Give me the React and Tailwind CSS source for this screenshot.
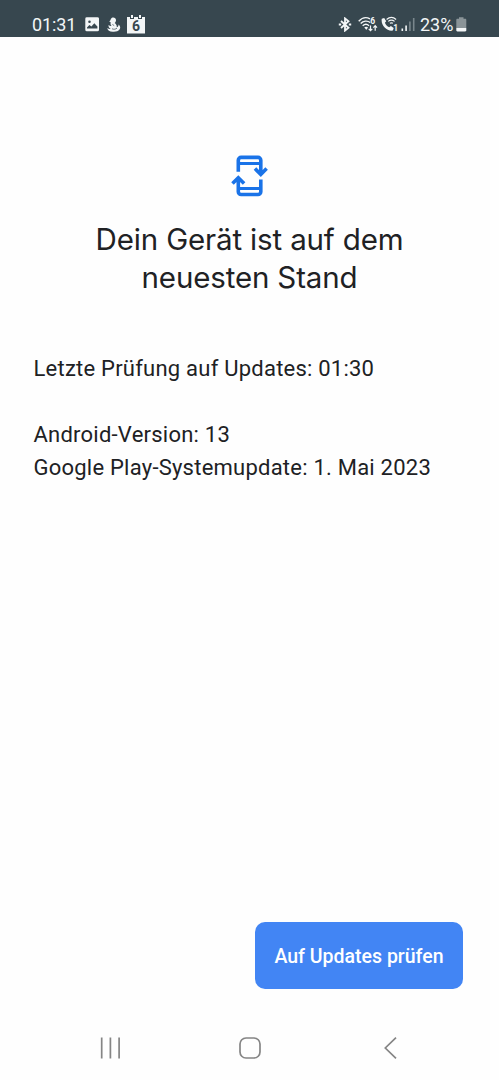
function StatusBar() {
  return (
    <header className="flex h-[37px] shrink-0 items-start bg-[#37474f] pl-[32px] pt-[12px] text-[#f3f6f7]">
      <span className="w-[44px] whitespace-nowrap text-[18px] leading-[25px] tracking-[-0.1px]">01:31</span>
      <svg className="ml-[9px] mt-[5px] h-[15px] w-[14px]" viewBox="0 0 14 15">
        <path fillRule="evenodd" fill="currentColor" d="M2 .3h10.4A1.6 1.6 0 0 1 14 2v10.7a1.6 1.6 0 0 1-1.6 1.6H2A1.6 1.6 0 0 1 .3 12.700V2A1.600 1.600 0 0 1 2 .3ZM2 11.500h10.400V9.400L9.300 6.300 6.400 9.600 4.400 8 2 10.400ZM4.500 3.400a1.300 1.300 0 1 0 0 2.600 1.300 1.300 0 0 0 0-2.600Z" />
      </svg>
      <svg className="ml-[8px] mt-[5px] h-[15px] w-[14px]" viewBox="0 0 14 15">
        <path fill="currentColor" d="M5 .7c2-.8 4.100.4 4 2.500 0 1.200-.6 2-1.300 2.700 1.600 1.200 2.300 2.600 2 4.400 1.300-.3 1.800-1.500 1.900-2.900 1.700 1.400 2.100 3.500.9 5.200-1.300 1.900-4 2.300-6.800 2.100C2.600 14.600.4 13.200.3 11c1 .9 2.200 1.200 3.400 1C2 11 1.300 9.600 1.600 8c.9.9 1.900 1.200 3 1C3.500 8 3.200 6.900 3.800 5.500L2.300 4.400 3.600 3C3.600 2 4.200 1.100 5 .7Z" />
        <path d="M5 11.800c2 .8 3.700.5 5-.7M5.400 7.400l1.800 1.200" fill="none" stroke="#37474f" strokeWidth=".7" />
      </svg>
      <svg className="ml-[6px] mt-[3px] h-[19px] w-[18px]" viewBox="0 0 18 19">
        <path d="M0 2h18v16.500H0z" fill="currentColor" />
        <path d="M3 0h4v4H3zM11 0h4v4h-4z" fill="#37474f" />
        <path d="M4 0h2v3H4zM12 0h2v3h-2z" fill="currentColor" />
        <text x="9" y="16.200" textAnchor="middle" fontSize="14" fontWeight="700" fill="#37474f">6</text>
      </svg>
      <svg className="ml-[193px] mt-[5px] h-[15px] w-[14px]" viewBox="0 0 14 15">
        <path d="m3 4 7.500 6.800L7 13.600V1.400l3.500 2.800L3 11" fill="none" stroke="currentColor" strokeWidth="1.800" />
        <path d="M.8 6.400h2.400v2.200H.8zM10.800 6.400h2.400v2.200h-2.400z" fill="currentColor" />
      </svg>
      <svg className="ml-[6px] mt-[4px] h-[17px] w-[21px]" viewBox="0 0 21 17">
        <g fill="none" stroke="currentColor" strokeWidth="1.400">
          <path d="M.7 5.300C4 1.600 8.500.9 12 2.800M2.700 7.500c2.600-2.800 6.700-3.200 9.500-1M4.700 9.800c1.900-1.900 4.500-1.900 6.300-.1M6.700 12c.9-.8 2-.8 2.900 0" />
          <path d="M12.500 9.500v5M10.700 12.800l1.800 1.900 1.800-1.900M17.200 14.800v-5M15.400 11.600l1.800-1.900 1.800 1.900" strokeWidth="1.200" />
        </g>
        <path d="M7 12h2.500l-1.300 2z" fill="currentColor" />
        <text x="12.200" y="8" fontSize="8.500" fontWeight="700" fill="currentColor">6</text>
      </svg>
      <svg className="ml-[2px] mt-[4px] h-[17px] w-[17px]" viewBox="0 0 17 17">
        <path fill="currentColor" d="m.8 2.800 2.400-.8 2 3.300-1.300 1.500c.9 2.200 2.200 3.500 4.300 4.500l1.700-1.300 2.800 2.100-.8 2.400C5.900 15.700-.5 8.800.8 2.800Z" />
        <g fill="none" stroke="currentColor" strokeWidth="1.200">
          <path d="M5.600 3.500c3-2.600 6.600-2.600 9.500 0M7.200 5.400c2.100-1.700 4.300-1.700 6.400 0M8.900 7.300c1-.7 2-.7 3 0" />
        </g>
        <text x="12.300" y="15.300" fontSize="8.500" fontWeight="700" fill="currentColor">1</text>
      </svg>
      <svg className="ml-[3px] mt-[5px] h-[15px] w-[14px]" viewBox="0 0 14 15">
        <path d="M.5 11.500h1.600V14H.5zM4.300 8.500h1.600V14H4.300z" fill="currentColor" />
        <path d="M8.100 4.500h1.600V14H8.100zM11.900 1h1.600v13h-1.600z" fill="#79868c" />
      </svg>
      <span className="ml-[5px] w-[34px] whitespace-nowrap text-[18px] leading-[25px]">23%</span>
      <svg className="ml-[2px] mt-[5px] h-[15px] w-[11px]" viewBox="0 0 11 15">
        <path d="M3 .3h4.500v1.500h1.700c.7 0 1.100.4 1.100 1.100V11H.3V2.900c0-.7.400-1.100 1.100-1.100H3z" fill="#8a9498" />
        <path d="M.3 11h10v2.300c0 .7-.4 1.100-1.100 1.100H1.400c-.7 0-1.100-.4-1.100-1.100z" fill="currentColor" />
      </svg>
    </header>
  );
}

function UpdateIcon() {
  return (
    <svg className="h-[42px] w-[39px]" viewBox="0 0 39 42" fill="none" stroke="#1a73e8" strokeWidth="3.600">
      <path d="M8.300 16.800V5.200a2.800 2.800 0 0 1 2.800-2.800h16.900a2.800 2.800 0 0 1 2.800 2.800v14M25 13.600l5.800 5.800 5.800-5.800" />
      <path d="M30.800 24.500v12.200a2.800 2.800 0 0 1-2.800 2.800H11.100a2.800 2.800 0 0 1-2.800-2.800V23M2.500 28.600l5.800-5.800 5.800 5.800" />
      <path d="M8.300 8.400h22.500M8.300 33.500h22.500" strokeWidth="3" />
    </svg>
  );
}

function NavigationBar() {
  return (
    <nav className="flex h-[64px] shrink-0 items-center justify-between px-[99px] text-[#858585]">
      <button aria-label="Letzte Apps">
        <svg className="h-[24px] w-[24px]" viewBox="0 0 24 24" fill="none" stroke="currentColor" strokeWidth="1.700">
          <path d="M2.700 1.500v21M11.400 1.500v21M20.100 1.500v21" />
        </svg>
      </button>
      <button aria-label="Startseite">
        <svg className="h-[24px] w-[24px]" viewBox="0 0 24 24" fill="none" stroke="currentColor" strokeWidth="1.700">
          <rect x="2" y="2" width="20" height="20" rx="6" />
        </svg>
      </button>
      <button aria-label="Zurück">
        <svg className="h-[24px] w-[24px]" viewBox="0 0 24 24" fill="none" stroke="currentColor" strokeWidth="1.700">
          <path d="M20 1.700 9.300 12 20 22.300" />
        </svg>
      </button>
    </nav>
  );
}

export default function App() {
  return (
    <div className="flex h-[1080px] w-[499px] flex-col overflow-hidden bg-[#fefefe] font-['Roboto',sans-serif] text-[#202124]">
      <StatusBar />
      <main className="flex flex-1 flex-col pt-[118px]">
        <div className="flex justify-center">
          <UpdateIcon />
        </div>
        <h1 className="mt-[23px] text-center font-['Inter',sans-serif] text-[29.500px] font-normal leading-[38px] tracking-[-0.150px]">
          Dein Gerät ist auf dem
          <br />
          neuesten Stand
        </h1>
        <div className="mt-[55.500px] pl-[33.500px] text-[22px] leading-[33.300px] tracking-[0.230px]">
          <p>Letzte Prüfung auf Updates: 01:30</p>
          <p className="mt-[33.300px]">Android-Version: 13</p>
          <p>Google Play-Systemupdate: 1. Mai 2023</p>
        </div>
        <div className="mb-[27px] mt-auto flex justify-end pr-[36px]">
          <button className="h-[67px] w-[208px] whitespace-nowrap rounded-[10px] bg-[#4285f4] pt-[2px] text-[19.500px] font-medium text-white">
            Auf Updates prüfen
          </button>
        </div>
      </main>
      <NavigationBar />
    </div>
  );
}
